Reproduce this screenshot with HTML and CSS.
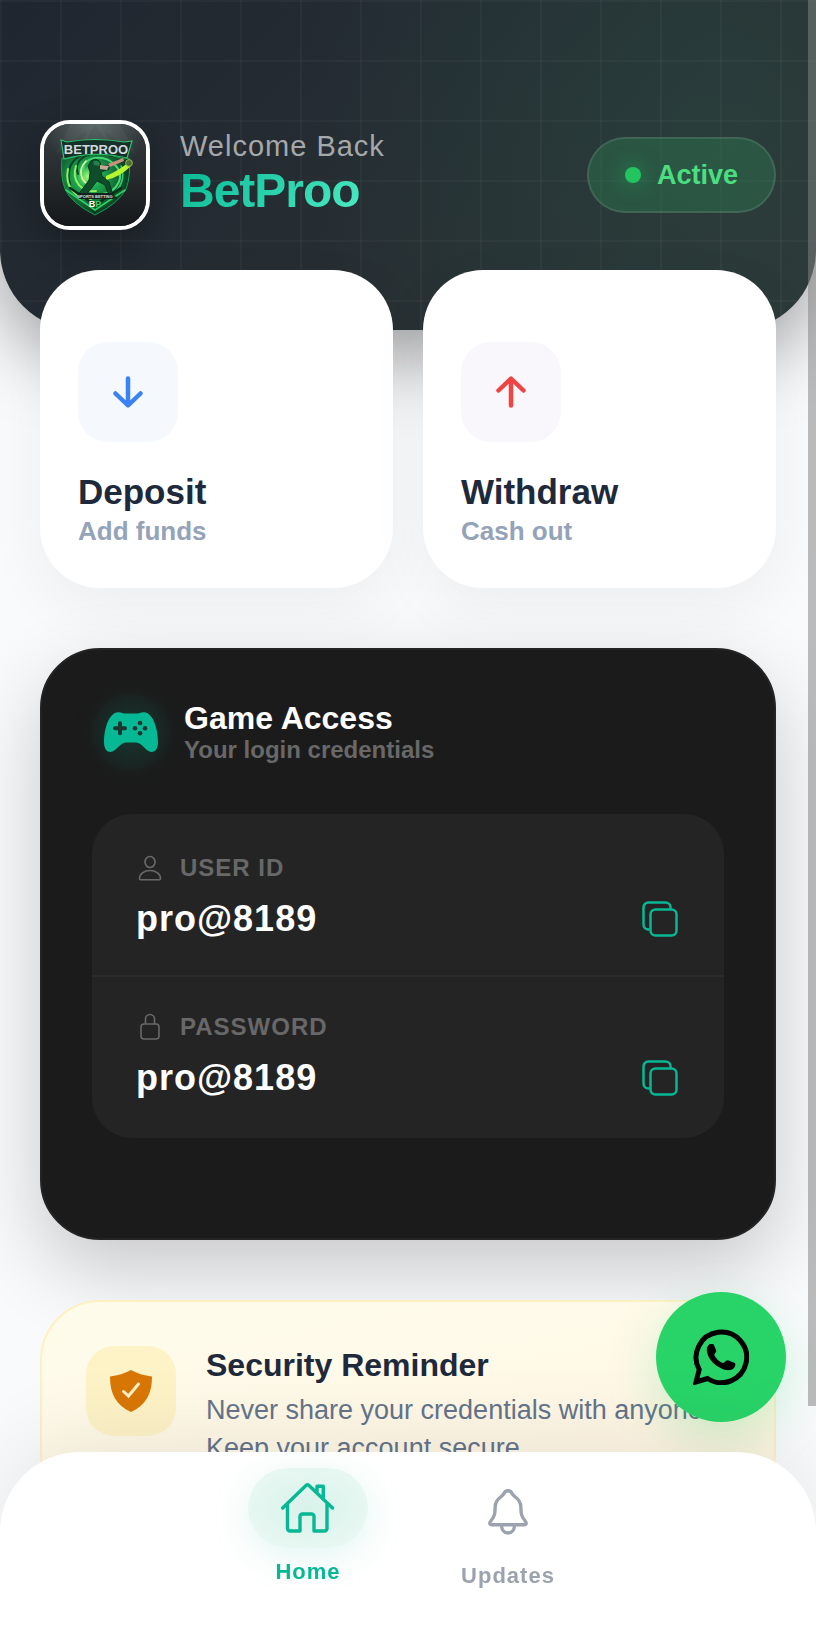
FILE: index.html
```html
<!DOCTYPE html>
<html lang="en">
<head>
    <title>BetProo</title>
    <meta charset="utf-8" />
    <meta name="viewport" content="width=device-width, initial-scale=1.0" />
    <link rel="stylesheet" href="styles.css">
</head>
<body>
<div class="page">
    <!--header-->
    <header class="header">
        <div class="avatar">
            <svg viewBox="0 0 102 102" role="img" aria-label="BetProo logo">
                <defs>
                    <linearGradient id="bg" x1="0" y1="0" x2="0" y2="1">
                        <stop offset="0" stop-color="#343b3e"/>
                        <stop offset=".5" stop-color="#262b2e"/>
                        <stop offset="1" stop-color="#15181a"/>
                    </linearGradient>
                    <radialGradient id="glow" cx=".5" cy="0" r=".5">
                        <stop offset="0" stop-color="#9fb5ac" stop-opacity=".35"/>
                        <stop offset="1" stop-color="#9fb5ac" stop-opacity="0"/>
                    </radialGradient>
                    <radialGradient id="swirl" cx=".4" cy=".38" r=".6">
                        <stop offset="0" stop-color="#a8ff7a"/>
                        <stop offset=".3" stop-color="#1fae52"/>
                        <stop offset="1" stop-color="#093a22"/>
                    </radialGradient>
                </defs>
                <rect width="102" height="102" fill="url(#bg)"/>
                <path d="M51 0L26 0L12 30ZM51 0L44 0L40 20ZM51 0L60 0L64 20ZM51 0L76 0L92 30Z" fill="#fff" opacity=".04"/>
                <rect width="102" height="102" fill="url(#glow)"/>
                <path d="M18 34L22 35Q51 24 80 35L85 34Q87 52 82 65Q75 79 51 91Q27 79 21 65Q16 52 18 34Z" fill="url(#swirl)" stroke="#19a052" stroke-width="1"/>
                <g fill="none" stroke-linecap="round">
                    <path d="M39 46C39 32 60 30 70 40C83 52 73 68 58 70" stroke="#47d873" stroke-width="2"/>
                    <path d="M34 50C28 32 52 24 68 32M26 60C20 38 36 27 56 27" stroke="#0a4428" stroke-width="2"/>
                    <path d="M32 42C27 57 38 69 52 67M24 45C20 63 33 76 47 75" stroke="#91f25d" stroke-width="2"/>
                    <path d="M42 37C33 46 37 58 46 61" stroke="#e6ff9a" stroke-width="1.6"/>
                    <path d="M77 42C82 54 76 65 68 70M22 66L51 86L81 66" stroke="#2fcf66" stroke-width="1.6"/>
                    <path d="M26 64L51 81L77 64" stroke="#082d1c" stroke-width="2.4"/>
                </g>
                <path d="M62 52Q74 47 85 38L87 42Q76 53 62 56Z" fill="#b6f52f"/>
                <circle cx="85" cy="39" r="3.4" fill="#4c6f2c" stroke="#a8c86a" stroke-width=".8"/>
                <!--batsman-->
                <path d="M47 37Q52 33 56 38L57 42L65 41L65 45L57 48L58 52L65 58L69 71L73 74H66L61 61L53 57L43 70L34 71L45 56L46 48L44 42Z" fill="#0d4d2c" stroke="#062417" stroke-width=".8"/>
                <path d="M49 38Q53 35 56 39L55 42L50 41Z" fill="#25804b"/>
                <path d="M64 40L79 34L80 37L66 43Z" fill="#c8907a"/>
                <path d="M56 41L65 42L63 46L56 45Z" fill="#c5a995"/>
                <path d="M17 16L23 18Q51 13 80 18L88 17L83 34Q51 26 20 35Z" fill="#16302a" stroke="#2cc66b" stroke-width="1.2"/>
                <text x="52" y="30" class="logo-name">BETPROO</text>
                <path d="M33 69H68L70 75H35Z" fill="#14201c"/>
                <text x="51" y="74" class="logo-tag">SPORTS BETTING</text>
                <text x="51" y="83" class="logo-mark">B<tspan fill="#35d46e">P</tspan></text>
            </svg>
        </div>
        <div class="welcome">
            <p class="welcome-text">Welcome Back</p>
            <h1 class="brand">BetProo</h1>
        </div>
        <div class="status"><span class="status-dot"></span>Active</div>
    </header>

    <main class="content">
        <!--quick actions-->
        <div class="actions">
            <a href="#deposit" class="action-card">
                <span class="action-icon deposit">
                    <svg width="32" height="32" viewBox="0 0 32 32"><path d="M16 2.500V29M3.500 17.500L16 29.500L28.500 17.500"/></svg>
                </span>
                <span class="action-title">Deposit</span>
                <span class="action-sub">Add funds</span>
            </a>
            <a href="#withdraw" class="action-card">
                <span class="action-icon withdraw">
                    <svg width="32" height="32" viewBox="0 0 32 32"><path d="M16 29.500V3M3.500 14.500L16 2.500L28.500 14.500"/></svg>
                </span>
                <span class="action-title">Withdraw</span>
                <span class="action-sub">Cash out</span>
            </a>
        </div>

        <!--game login-->
        <section class="game-card">
            <div class="game-head">
                <div class="game-icon">
                    <svg width="54" height="40" viewBox="0 0 54 40">
                        <path d="M14 .3C17 0 19 1.600 22 1.600H32C35 1.600 37 0 40 .3C49 .6 54 17 54 30C54 37 51 40 47.500 40C42 40 38 30.500 32 30.500H22C16 30.500 12 40 6.500 40C3 40 0 37 0 30C0 17 5 .6 14 .3Z" fill="#06b893"/>
                        <path d="M16 11.300V21.300M11 16.300H21" stroke="#1c3530" stroke-width="4" stroke-linecap="round"/>
                        <g fill="#1c3530">
                            <circle cx="36" cy="11" r="2.300"/>
                            <circle cx="31" cy="16.300" r="2.300"/>
                            <circle cx="41" cy="16.300" r="2.300"/>
                            <circle cx="36" cy="21.300" r="2.300"/>
                        </g>
                    </svg>
                </div>
                <div>
                    <h2 class="game-title">Game Access</h2>
                    <p class="game-sub">Your login credentials</p>
                </div>
            </div>
            <div class="cred-list">
                <div class="cred">
                    <div class="cred-label">
                        <svg width="28" height="28" viewBox="0 0 28 28"><ellipse cx="14" cy="8" rx="5" ry="5.500"/><path d="M3.500 24.500C3.500 20 8 16.500 14 16.500S24.500 20 24.500 24.500C24.500 25.300 24 25.800 23.500 25.800H4.500C4 25.800 3.500 25.300 3.500 24.500Z"/></svg>
                        USER ID
                    </div>
                    <div class="cred-line">
                        <span class="cred-value">pro@8189</span>
                        <button type="button" class="copy-btn" aria-label="Copy user ID">
                            <svg width="40" height="40" viewBox="0 0 40 40"><path d="M30.500 10V8.500A5 5 0 0 0 25.500 3.500H8.500A5 5 0 0 0 3.500 8.500V25.500A5 5 0 0 0 8.500 30.500H9.500"/><rect x="10.500" y="10.500" width="26" height="26" rx="5"/></svg>
                        </button>
                    </div>
                </div>
                <div class="cred">
                    <div class="cred-label">
                        <svg width="28" height="28" viewBox="0 0 28 28"><rect x="5" y="11" width="18" height="15" rx="3"/><path d="M9.500 11V6A4.500 4.500 0 0 1 18.500 6V11"/></svg>
                        PASSWORD
                    </div>
                    <div class="cred-line">
                        <span class="cred-value">pro@8189</span>
                        <button type="button" class="copy-btn" aria-label="Copy password">
                            <svg width="40" height="40" viewBox="0 0 40 40"><path d="M30.500 10V8.500A5 5 0 0 0 25.500 3.500H8.500A5 5 0 0 0 3.500 8.500V25.500A5 5 0 0 0 8.500 30.500H9.500"/><rect x="10.500" y="10.500" width="26" height="26" rx="5"/></svg>
                        </button>
                    </div>
                </div>
            </div>
        </section>

        <!--security-->
        <section class="notice">
            <div class="notice-icon">
                <svg width="42" height="42" viewBox="0 0 42 42">
                    <path d="M21 0C15 3.500 8 5.500 0 6.500C0 24 6 35 21 42C36 35 42 24 42 6.500C34 5.500 27 3.500 21 0Z" fill="#d97706"/>
                    <path d="M13.500 21.500L18.500 26L28.500 14" fill="none" stroke="#fdf1c6" stroke-width="3" stroke-linecap="round"/>
                </svg>
            </div>
            <div>
                <h2 class="notice-title">Security Reminder</h2>
                <p class="notice-text">Never share your credentials with anyone. Keep your account secure.</p>
            </div>
        </section>
    </main>
</div>

<a href="#whatsapp" class="chat-btn" aria-label="WhatsApp">
    <svg width="56" height="56" viewBox="0 0 56 56">
        <path d="M14.500 49.500A25.300 25.300 0 1 0 6.200 40.500L3 53Z" fill="none" stroke="#000" stroke-width="5"/>
        <path d="M13.800 20C14 17 16 15 18 15C20 14.800 20.600 15 21.200 16.500L23.200 21.500C23.600 23 22 24 21.300 25.500C22 29 27 33.500 30.500 34C32 33 33.500 30.800 35 31.200L41.800 34C43 35 42.300 37.500 41 39C38 42 33 41.700 28.500 39.500C20 35.500 13.500 28 13.800 20Z"/>
    </svg>
</a>

<!--bottom nav-->
<nav class="tabbar">
    <a href="#home" class="tab active">
        <span class="tab-icon">
            <svg width="54" height="50" viewBox="0 0 54 50"><path d="M1.700 25L25 2.500Q26.500 1 28 2.500L51.500 25M6.500 20.500V45.500A2.500 2.500 0 0 0 9 48H19V33.500A2.500 2.500 0 0 1 21.500 31H30.500A2.500 2.500 0 0 1 33 33.500V48H43.500A2.500 2.500 0 0 0 46 45.500V20.500M36 10V3.200H42.300V16"/></svg>
        </span>
        Home
    </a>
    <a href="#updates" class="tab">
        <span class="tab-icon">
            <svg width="40" height="46" viewBox="0 0 40 46"><path d="M20 1.800C17.500 1.800 16.500 3 15.500 5.200C13.500 8.500 7.500 9.500 7.200 17.500C7 24 7 27 3.200 31.500C1 34 1.500 35.700 4 35.700H36C38.500 35.700 39 34 36.800 31.500C33 27 33 24 32.800 17.500C32.500 9.500 26.500 8.500 24.500 5.200C23.500 3 22.500 1.800 20 1.800ZM13.500 36C13.500 40.500 16 44 20 44S26.500 40.500 26.500 36"/></svg>
        </span>
        Updates
    </a>
</nav>
<div class="scroll-thumb"></div>
</body>
</html>
```
FILE: styles.css
```css
*{box-sizing: border-box;}
body{
    margin: 0;
    font-family: "Liberation Sans", Arial, Helvetica, sans-serif;
    background-color: #f9fafc;
    color: #1e293b;
}
h1,h2,p{margin: 0;}
a{text-decoration: none;color: inherit;}
svg{display: block;}
.page{
    height: 100vh;
    overflow-y: auto;
    scrollbar-width: none;
}

/*header*/
.header{
    display: flex;
    align-items: center;
    gap: 30px;
    padding: 120px 40px 100px;
    border-radius: 0 0 80px 80px;
    background:
        repeating-linear-gradient(90deg, rgba(255,255,255,.03) 0 2px, transparent 2px 60px),
        repeating-linear-gradient(180deg, rgba(255,255,255,.03) 0 2px, transparent 2px 60px),
        radial-gradient(circle at 85% 35%, rgba(40,110,90,.2), transparent 55%),
        linear-gradient(135deg, #1f2630, #2d3535);
    box-shadow: 0 20px 80px rgba(0,0,0,.4);
}
.avatar{
    flex: none;
    width: 110px;
    height: 110px;
    overflow: hidden;
    border: 4px solid #fff;
    border-radius: 30px;
    box-shadow: 0 16px 40px rgba(0,0,0,.3);
}
.logo-name{font-size: 13px;font-weight: bold;fill: #d3d9db;text-anchor: middle;}
.logo-tag{font-size: 4px;font-weight: bold;fill: #dde5e0;text-anchor: middle;}
.logo-mark{font-size: 9px;font-weight: bold;fill: #fff;text-anchor: middle;}
.welcome{flex: 1;}
.welcome-text{
    font-size: 29px;
    line-height: 32px;
    letter-spacing: 1px;
    color: #a5a8aa;
}
.brand{
    width: fit-content;
    font-size: 48px;
    line-height: 58px;
    letter-spacing: -1px;
    background: linear-gradient(135deg, #06b893, #4eecc4);
    -webkit-background-clip: text;
    background-clip: text;
    color: transparent;
}
.status{
    display: flex;
    align-items: center;
    gap: 16px;
    padding: 20px 36px;
    border: 2px solid rgba(255,255,255,.1);
    border-radius: 38px;
    background-color: rgba(46,125,80,.42);
    font-size: 27px;
    line-height: 32px;
    font-weight: bold;
    color: #4ade80;
}
.status-dot{
    width: 16px;
    height: 16px;
    border-radius: 50%;
    background-color: #22c55e;
    box-shadow: 0 0 20px rgba(34,197,94,.6);
}

/*content*/
.content{
    display: flex;
    flex-direction: column;
    gap: 60px;
    margin-top: -60px;
    padding: 0 40px 240px;
}
.actions{
    display: grid;
    grid-template-columns: 1fr 1fr;
    gap: 30px;
}
.action-card{
    display: flex;
    flex-direction: column;
    padding: 72px 38px 38px;
    border-radius: 60px;
    background-color: #fff;
    box-shadow: 0 20px 60px rgba(0,0,0,.05);
}
.action-icon{
    display: flex;
    align-items: center;
    justify-content: center;
    width: 100px;
    height: 100px;
    margin-bottom: 30px;
    border-radius: 30px;
}
.action-icon svg{
    fill: none;
    stroke: currentColor;
    stroke-width: 4.5;
    stroke-linecap: round;
    stroke-linejoin: round;
}
.deposit{background-color: #f5f9fe;color: #3b82f6;}
.withdraw{background-color: #f9f7fb;color: #ef4444;}
.action-title{font-size: 35px;line-height: 40px;font-weight: bold;}
.action-sub{font-size: 26px;line-height: 38px;font-weight: bold;color: #94a3b8;}

/*game access*/
.game-card{
    padding: 43px 50px 100px;
    border: 2px solid #242424;
    border-radius: 60px;
    background-color: #1b1b1b;
    box-shadow: 0 30px 80px rgba(0,0,0,.2);
}
.game-head{
    display: flex;
    align-items: center;
    gap: 14px;
    margin-bottom: 43px;
}
.game-icon{
    display: flex;
    align-items: center;
    justify-content: center;
    width: 78px;
    height: 78px;
    border-radius: 50%;
    background: radial-gradient(closest-side, rgba(6,184,147,.18), rgba(6,184,147,.06) 90%, rgba(6,184,147,.03));
    box-shadow: 0 0 24px rgba(6,184,147,.06);
}
.game-title{font-size: 32px;line-height: 36px;color: #fff;}
.game-sub{font-size: 24px;line-height: 28px;font-weight: bold;color: #686868;}
.cred-list{
    padding: 4px 0;
    border-radius: 40px;
    background-color: #242424;
}
.cred{padding: 35px 44px 34px;}
.cred + .cred{border-top: 2px solid #2b2b2b;}
.cred-label{
    display: flex;
    align-items: center;
    gap: 16px;
    height: 30px;
    margin-bottom: 14px;
    font-size: 24px;
    font-weight: bold;
    letter-spacing: 1px;
    color: #686868;
}
.cred-label svg{
    fill: none;
    stroke: currentColor;
    stroke-width: 1.6;
}
.cred-line{
    display: flex;
    align-items: center;
    justify-content: space-between;
    height: 44px;
}
.cred-value{
    font-size: 36px;
    font-weight: bold;
    letter-spacing: 1px;
    color: #fff;
}
.copy-btn{
    padding: 0;
    border: 0;
    background: none;
    color: #06b893;
    cursor: pointer;
}
.copy-btn svg{
    fill: none;
    stroke: currentColor;
    stroke-width: 2.5;
}

/*security reminder*/
.notice{
    display: flex;
    align-items: flex-start;
    gap: 30px;
    padding: 44px;
    border: 2px solid #fef0c3;
    border-radius: 60px;
    background: linear-gradient(170deg, #fffbeb 20%, #fff4e0);
}
.notice-icon{
    display: flex;
    flex: none;
    align-items: center;
    justify-content: center;
    width: 90px;
    height: 90px;
    border-radius: 28px;
    background-color: #fef3c7;
}
.notice-title{font-size: 32px;line-height: 38px;}
.notice-text{
    margin-top: 7px;
    font-size: 27px;
    line-height: 38px;
    color: #64748b;
}

/*floating chat button*/
.chat-btn{
    position: fixed;
    right: 30px;
    bottom: 210px;
    display: flex;
    align-items: center;
    justify-content: center;
    width: 130px;
    height: 130px;
    border-radius: 50%;
    background-color: #28d468;
    box-shadow: 0 16px 50px rgba(37,211,102,.22);
}

/*tab bar*/
.tabbar{
    position: fixed;
    left: 0;
    right: 0;
    bottom: 0;
    display: flex;
    justify-content: center;
    gap: 80px;
    padding-bottom: 43px;
    border-radius: 80px 80px 0 0;
    background-color: #fff;
    box-shadow: 0 -20px 80px rgba(0,0,0,.07);
}
.tab{
    display: flex;
    flex-direction: column;
    align-items: center;
    gap: 11px;
    width: 120px;
    padding-top: 20px;
    font-size: 22px;
    line-height: 26px;
    font-weight: bold;
    letter-spacing: 1px;
    color: #9ca3af;
}
.tab-icon{
    display: flex;
    align-items: center;
    justify-content: center;
    width: 120px;
    height: 80px;
    border-radius: 40px;
}
.tab-icon svg{
    fill: none;
    stroke: currentColor;
    stroke-width: 3.4;
    stroke-linecap: round;
    stroke-linejoin: round;
}
.tab.active{padding-top: 16px;color: #06b893;}
.active .tab-icon{
    background: radial-gradient(closest-side, #d8f2ea, #e7f7f2);
    box-shadow: 0 8px 40px rgba(6,184,147,.12);
}
.scroll-thumb{
    position: fixed;
    top: 0;
    right: 0;
    bottom: 226px;
    width: 8px;
    background-color: rgba(130,130,130,.53);
}
```
